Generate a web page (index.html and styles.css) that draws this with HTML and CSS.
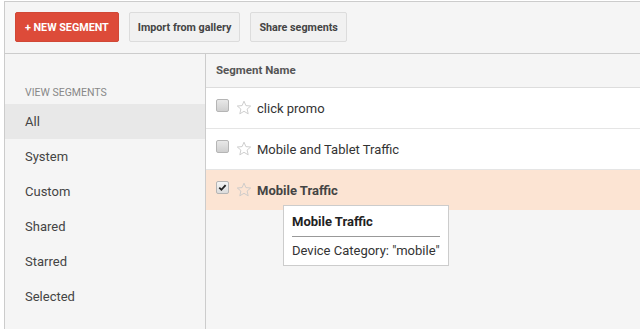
FILE: index.html
```html
<!DOCTYPE html>
<html lang="en">
<head>
    <meta charset="UTF-8">
    <title>Segments</title>
    <link rel="stylesheet" href="styles.css">
</head>
<body>
    <div class="panel">
        <div class="toolbar">
            <button class="btn btn-red">+ NEW SEGMENT</button>
            <button class="btn">Import from gallery</button>
            <button class="btn">Share segments</button>
        </div>

        <div class="main">
            <div class="sidebar">
                <div class="side-title">VIEW SEGMENTS</div>
                <div class="side-item active">All</div>
                <div class="side-item">System</div>
                <div class="side-item">Custom</div>
                <div class="side-item">Shared</div>
                <div class="side-item">Starred</div>
                <div class="side-item">Selected</div>
            </div>

            <div class="content">
                <div class="table-head">Segment Name</div>

                <div class="row">
                    <span class="check"></span>
                    <svg class="star" viewBox="0 0 16 16"><path d="M8 1.2l1.9 4.4 4.8.4-3.6 3.1 1.1 4.7L8 11.3l-4.2 2.5 1.1-4.7L1.3 6l4.8-.4z"/></svg>
                    <span class="name">click promo</span>
                </div>
                <div class="row">
                    <span class="check"></span>
                    <svg class="star" viewBox="0 0 16 16"><path d="M8 1.2l1.9 4.4 4.8.4-3.6 3.1 1.1 4.7L8 11.3l-4.2 2.5 1.1-4.7L1.3 6l4.8-.4z"/></svg>
                    <span class="name">Mobile and Tablet Traffic</span>
                </div>
                <div class="row selected">
                    <span class="check checked">
                        <svg viewBox="0 0 12 12"><path d="M2.5 6.2l2.3 2.3 4.6-5"/></svg>
                    </span>
                    <svg class="star" viewBox="0 0 16 16"><path d="M8 1.2l1.9 4.4 4.8.4-3.6 3.1 1.1 4.7L8 11.3l-4.2 2.5 1.1-4.7L1.3 6l4.8-.4z"/></svg>
                    <span class="name">Mobile Traffic</span>

                    <div class="tooltip">
                        <div class="tip-title">Mobile Traffic</div>
                        <div class="tip-body">Device Category: "mobile"</div>
                    </div>
                </div>
            </div>
        </div>
    </div>
</body>
</html>
```

FILE: styles.css
```css
body {
    margin: 0;
    font-family: Roboto, "Liberation Sans", sans-serif;
    color: #333;
    background-color: #fff;
}

.panel {
    margin: 1px 0 0 4px;
    height: 328px;
    border-top: 1px solid #ccc;
    border-left: 1px solid #ccc;
    background-color: #f5f5f5;
    display: flex;
    flex-direction: column;
    box-sizing: border-box;
}

.toolbar {
    display: flex;
    gap: 10px;
    padding: 10px 10px 0 10px;
    height: 52px;
    box-sizing: border-box;
    border-bottom: 1px solid #ccc;
}

.btn {
    height: 30px;
    padding: 0 8px;
    font-family: Roboto, "Liberation Sans", sans-serif;
    font-size: 10.75px;
    font-weight: bold;
    color: #444;
    white-space: nowrap;
    background-color: #f1f1f1;
    border: 1px solid #dcdcdc;
    border-radius: 2px;
}

.btn-red {
    color: #fff;
    background-color: #dd4b39;
    border-color: #d14836;
    padding: 0 9px;
}

.main {
    display: flex;
    flex: 1;
}

.sidebar {
    width: 200px;
    border-right: 1px solid #ccc;
    padding-top: 32px;
}

.side-title {
    font-size: 10.5px;
    color: #888;
    padding-left: 20px;
    height: 18px;
}

.side-item {
    height: 35px;
    line-height: 35px;
    padding-left: 20px;
    font-size: 13px;
    color: #444;
}

.side-item.active {
    background-color: #e8e8e8;
}

.content {
    flex: 1;
}

.table-head {
    height: 33px;
    line-height: 33px;
    padding-left: 10px;
    font-size: 11.5px;
    font-weight: bold;
    color: #555;
    border-bottom: 1px solid #ddd;
}

.row {
    position: relative;
    display: flex;
    align-items: center;
    height: 40px;
    padding-left: 10px;
    background-color: #fff;
    border-bottom: 1px solid #e5e5e5;
    font-size: 13px;
    color: #333;
}

.row.selected {
    background-color: #fce4d3;
    border-bottom: none;
}

.check {
    width: 11px;
    height: 11px;
    margin-top: -6px;
    border: 1px solid #b5b5b5;
    border-radius: 2px;
    background: linear-gradient(#e8e8e8, #cfcfcf);
    display: flex;
}

.check svg {
    width: 11px;
    height: 11px;
    fill: none;
    stroke: #222;
    stroke-width: 2;
}

.check.checked {
    background: linear-gradient(#f4f4f4, #dcdcdc);
}

.star {
    width: 16px;
    height: 16px;
    margin-left: 7px;
    margin-right: 5px;
    fill: none;
    stroke: #c8c8c8;
    stroke-width: 0.9;
}

.selected .name {
    font-weight: bold;
    color: #444;
}

.tooltip {
    position: absolute;
    left: 77px;
    top: 35px;
    width: 148px;
    padding: 8px 8px 7px 8px;
    background-color: #fff;
    border: 1px solid #ccc;
    z-index: 2;
}

.tip-title {
    font-size: 13px;
    font-weight: bold;
    color: #222;
    padding-bottom: 7px;
    border-bottom: 1px solid #999;
}

.tip-body {
    font-size: 13px;
    color: #333;
    padding-top: 6px;
}
```
